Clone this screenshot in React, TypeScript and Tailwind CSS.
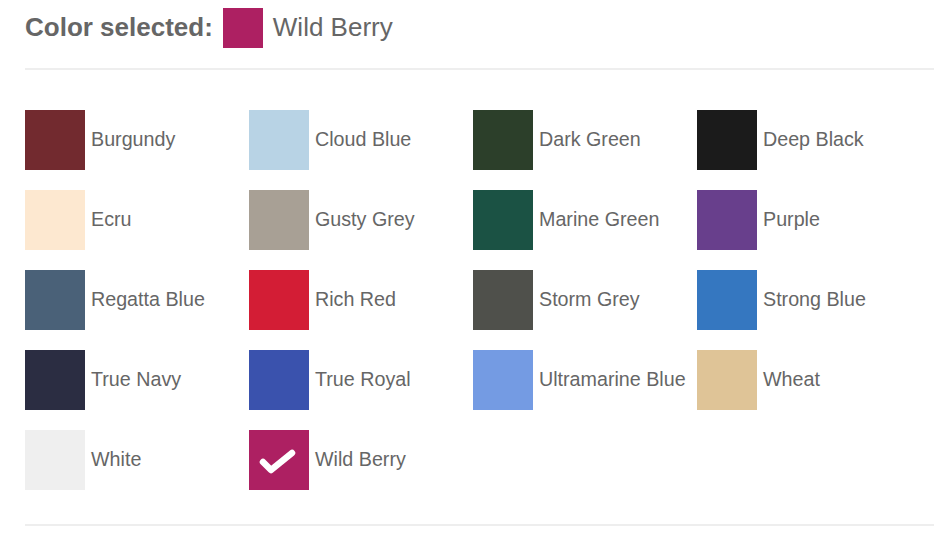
const colors: { name: string; hex: string }[] = [
  { name: "Burgundy", hex: "#722a2f" },
  { name: "Cloud Blue", hex: "#b8d3e5" },
  { name: "Dark Green", hex: "#2c3f2a" },
  { name: "Deep Black", hex: "#1b1b1b" },
  { name: "Ecru", hex: "#fde8d0" },
  { name: "Gusty Grey", hex: "#a8a095" },
  { name: "Marine Green", hex: "#1b5244" },
  { name: "Purple", hex: "#683f8c" },
  { name: "Regatta Blue", hex: "#4a6178" },
  { name: "Rich Red", hex: "#d31d35" },
  { name: "Storm Grey", hex: "#4f504b" },
  { name: "Strong Blue", hex: "#3577c0" },
  { name: "True Navy", hex: "#2b2d42" },
  { name: "True Royal", hex: "#3a52ad" },
  { name: "Ultramarine Blue", hex: "#749be3" },
  { name: "Wheat", hex: "#dfc497" },
  { name: "White", hex: "#efefef" },
  { name: "Wild Berry", hex: "#ad2062" },
];

const selected = "Wild Berry";

function Check() {
  return (
    <svg width="60" height="60" viewBox="0 0 60 60" className="absolute inset-0">
      <path
        d="M14 32 L22 40 L43 23"
        fill="none"
        stroke="white"
        strokeWidth="6.5"
        strokeLinecap="round"
        strokeLinejoin="round"
        style={{ filter: "blur(0.5px)" }}
      />
    </svg>
  );
}

export default function App() {
  const sel = colors.find((c) => c.name === selected)!;
  return (
    <div
      className="h-[536px] w-[934px] overflow-hidden bg-white pl-[25px] text-[#666666]"
      style={{ fontFamily: '"Liberation Sans", Arial, sans-serif' }}
    >
      <div className="flex h-[68px] items-start pt-2">
        <span className="mt-[4px] text-[26px] font-bold leading-[30px]">Color selected:</span>
        <div className="ml-[10px] h-10 w-10" style={{ background: sel.hex }} />
        <span className="ml-[10px] mt-[4px] text-[26px] leading-[30px]">{sel.name}</span>
      </div>
      <div className="h-[2px] bg-[#eeeeee]" />
      <div className="grid grid-cols-[224px_224px_224px_224px] gap-y-5 pt-10 pb-[34px]">
        {colors.map((c) => (
          <div key={c.name} className="flex items-center">
            <div className="relative h-[60px] w-[60px] shrink-0" style={{ background: c.hex }}>
              {c.name === selected && <Check />}
            </div>
            <span className="mb-[2px] ml-[6px] text-[19.7px] leading-[24px]">{c.name}</span>
          </div>
        ))}
      </div>
      <div className="h-[2px] bg-[#eeeeee]" />
    </div>
  );
}
